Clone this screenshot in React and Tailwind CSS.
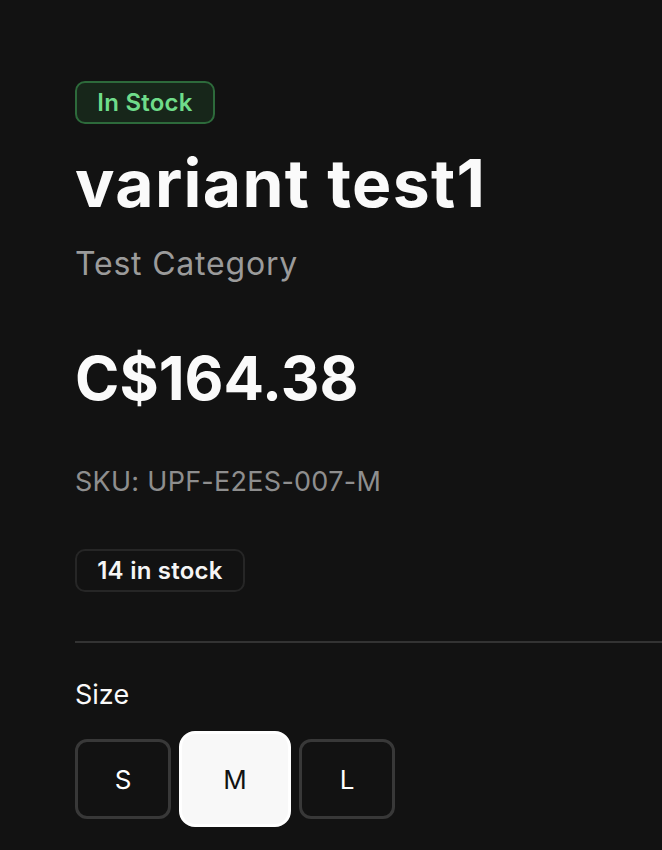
import React, { useState } from 'react';

const SIZES = ['S', 'M', 'L'];

export default function App() {
  const [size, setSize] = useState('M');

  return (
    <div
      className="min-h-screen w-full bg-[#121212] text-[#fafafa] overflow-hidden"
      style={{ fontFamily: 'Inter, "Noto Sans", sans-serif' }}
    >
      <div className="pl-[75px] pt-[81px] pb-10 flex flex-col">
        {/* Stock badge */}
        <span className="self-start inline-flex items-center justify-center w-[140px] h-[43px] rounded-[10px] border-2 border-[#2d6a3b] bg-[#17261a] text-[#6fdc8a] text-[24px] font-semibold tracking-[0.01em]">
          In Stock
        </span>

        <h1 className="mt-[26px] text-[66px] leading-[66px] font-bold tracking-[0.02em] text-[#fafafa]">
          variant test1
        </h1>
        <p className="mt-[29px] text-[32px] leading-[37px] tracking-[0.025em] text-[#9b9b9b]">Test Category</p>

        <div className="mt-[66px] text-[60px] leading-[60px] font-bold">C$164.38</div>

        <p className="mt-[58px] text-[27px] leading-[32px] tracking-[0.01em] text-[#8e8e8e]">SKU: UPF-E2ES-007-M</p>

        <span className="mt-[51px] self-start inline-flex items-center justify-center w-[170px] h-[43px] rounded-[10px] border-2 border-[#262626] text-[24px] font-semibold tracking-[0.01em] text-[#f5f5f5]">
          14 in stock
        </span>

        <div className="mt-[49px] h-[2px] w-full bg-[#333333]" />

        {/* Size selector */}
        <div className="mt-[36px] text-[27px] leading-[32px]">Size</div>
        <div className="mt-[28px] flex items-center gap-4">
          {SIZES.map((s) => {
            const active = s === size;
            return (
              <button
                key={s}
                onClick={() => setSize(s)}
                className={
                  active
                    ? 'w-[112px] h-[96px] -mx-2 -my-2 rounded-[16px] border-[3px] border-white bg-[#f8f8f8] text-[#121212] text-[26px]'
                    : 'w-[96px] h-[80px] rounded-[12px] border-[3px] border-[#383838] bg-transparent text-white text-[26px]'
                }
              >
                {s}
              </button>
            );
          })}
        </div>
      </div>
    </div>
  );
}
